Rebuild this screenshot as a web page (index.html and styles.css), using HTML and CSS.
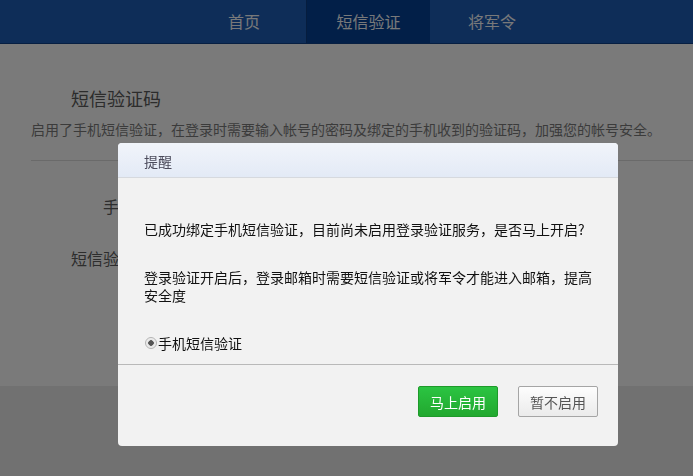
FILE: index.html
```html
<!DOCTYPE html>
<html>
<head>
    <meta charset="utf-8">
    <title>短信验证</title>
    <link rel="stylesheet" href="styles.css">
</head>
<body>
    <header class="topbar">
        <ul class="nav">
            <li><a href="#">首页</a></li>
            <li class="active"><a href="#">短信验证</a></li>
            <li><a href="#">将军令</a></li>
        </ul>
    </header>

    <main class="content">
        <h1 class="title">短信验证码</h1>
        <p class="desc">启用了手机短信验证，在登录时需要输入帐号的密码及绑定的手机收到的验证码，加强您的帐号安全。</p>

        <div class="form">
            <div class="row">
                <label class="label">手机号：</label>
            </div>
            <div class="row">
                <label class="label">短信验证码：</label>
            </div>
        </div>
    </main>

    <div class="mask"></div>

    <div class="dialog">
        <div class="dialog-head">提醒</div>
        <div class="dialog-body">
            <p>已成功绑定手机短信验证，目前尚未启用登录验证服务，是否马上开启?</p>
            <p>登录验证开启后，登录邮箱时需要短信验证或将军令才能进入邮箱，提高安全度</p>
            <label class="radio">
                <input type="radio" name="verify" checked>
                <span>手机短信验证</span>
            </label>
        </div>
        <div class="dialog-foot">
            <button class="btn btn-ok">马上启用</button>
            <button class="btn btn-cancel">暂不启用</button>
        </div>
    </div>
</body>
</html>
```

FILE: styles.css
```css
* {
    box-sizing: border-box;
    margin: 0;
    padding: 0;
}

body {
    font-family: "Noto Sans CJK SC", "Liberation Sans", sans-serif;
    font-size: 14px;
    background-color: #e2e2e2;
}

/* top navigation */
.topbar {
    height: 44px;
    background-color: #1c5ab0;
    border-bottom: 1px solid #0f3f85;
}

.nav {
    list-style-type: none;
    display: flex;
    padding-left: 182px;
}

.nav li {
    width: 124px;
    text-align: center;
}

.nav li.active {
    background-color: #043e90;
    border-left: 1px solid #0d3a7c;
}

.nav li a {
    display: block;
    line-height: 43px;
    font-size: 16px;
    color: #f0f2f5;
    text-decoration: none;
}

/* page content */
.content {
    height: 342px;
    background-color: #f5f5f5;
    padding-left: 31px;
}

.title {
    padding-top: 42px;
    margin-left: 40px;
    font-size: 18px;
    font-weight: normal;
    line-height: 24px;
    color: #585858;
}

.desc {
    margin-top: 9px;
    line-height: 20px;
    color: #777;
    padding-bottom: 21px;
    border-bottom: 1px solid #d4d4d4;
}

.form {
    padding-top: 35px;
}

.row {
    display: flex;
    line-height: 20px;
    margin-bottom: 32px;
    font-size: 16px;
    color: #5a5a5a;
}

.label {
    width: 136px;
    text-align: right;
}

/* modal */
.mask {
    position: fixed;
    top: 0;
    left: 0;
    right: 0;
    bottom: 0;
    background-color: rgba(0, 0, 0, 0.5);
}

.dialog {
    position: absolute;
    top: 143px;
    left: 118px;
    width: 500px;
    background-color: #f2f2f2;
    border-radius: 4px;
    overflow: hidden;
}

.dialog-head {
    height: 35px;
    line-height: 36px;
    padding-left: 26px;
    color: #4b4b5b;
    background: linear-gradient(#f1f4fa, #e3eaf6);
    border-bottom: 1px solid #d6d9de;
}

.dialog-body {
    padding: 42px 26px 12px;
    color: #111;
    line-height: 18px;
}

.dialog-body p {
    margin-bottom: 30px;
}

.radio {
    display: flex;
    align-items: center;
    height: 18px;
}

.radio input {
    appearance: none;
    width: 12px;
    height: 12px;
    margin: 0 1px 0 1px;
    border: 1px solid #b4b4b4;
    border-radius: 50%;
    background: radial-gradient(circle, #555 0, #555 2.5px, #e4e4e4 3px, #f5f5f5 6px);
}

.dialog-foot {
    border-top: 1px solid #b9b9b9;
    padding: 21px 20px 29px;
    display: flex;
    justify-content: flex-end;
    gap: 20px;
}

.btn {
    width: 80px;
    height: 31px;
    font-family: inherit;
    font-size: 14px;
    border-radius: 2px;
    cursor: pointer;
}

.btn-ok {
    color: #fff;
    background: linear-gradient(#2bc442, #22a82f);
    border: 1px solid #1e9a2a;
}

.btn-cancel {
    color: #555;
    background: linear-gradient(#fdfdfd, #ebebeb);
    border: 1px solid #a5a5a5;
}
```
